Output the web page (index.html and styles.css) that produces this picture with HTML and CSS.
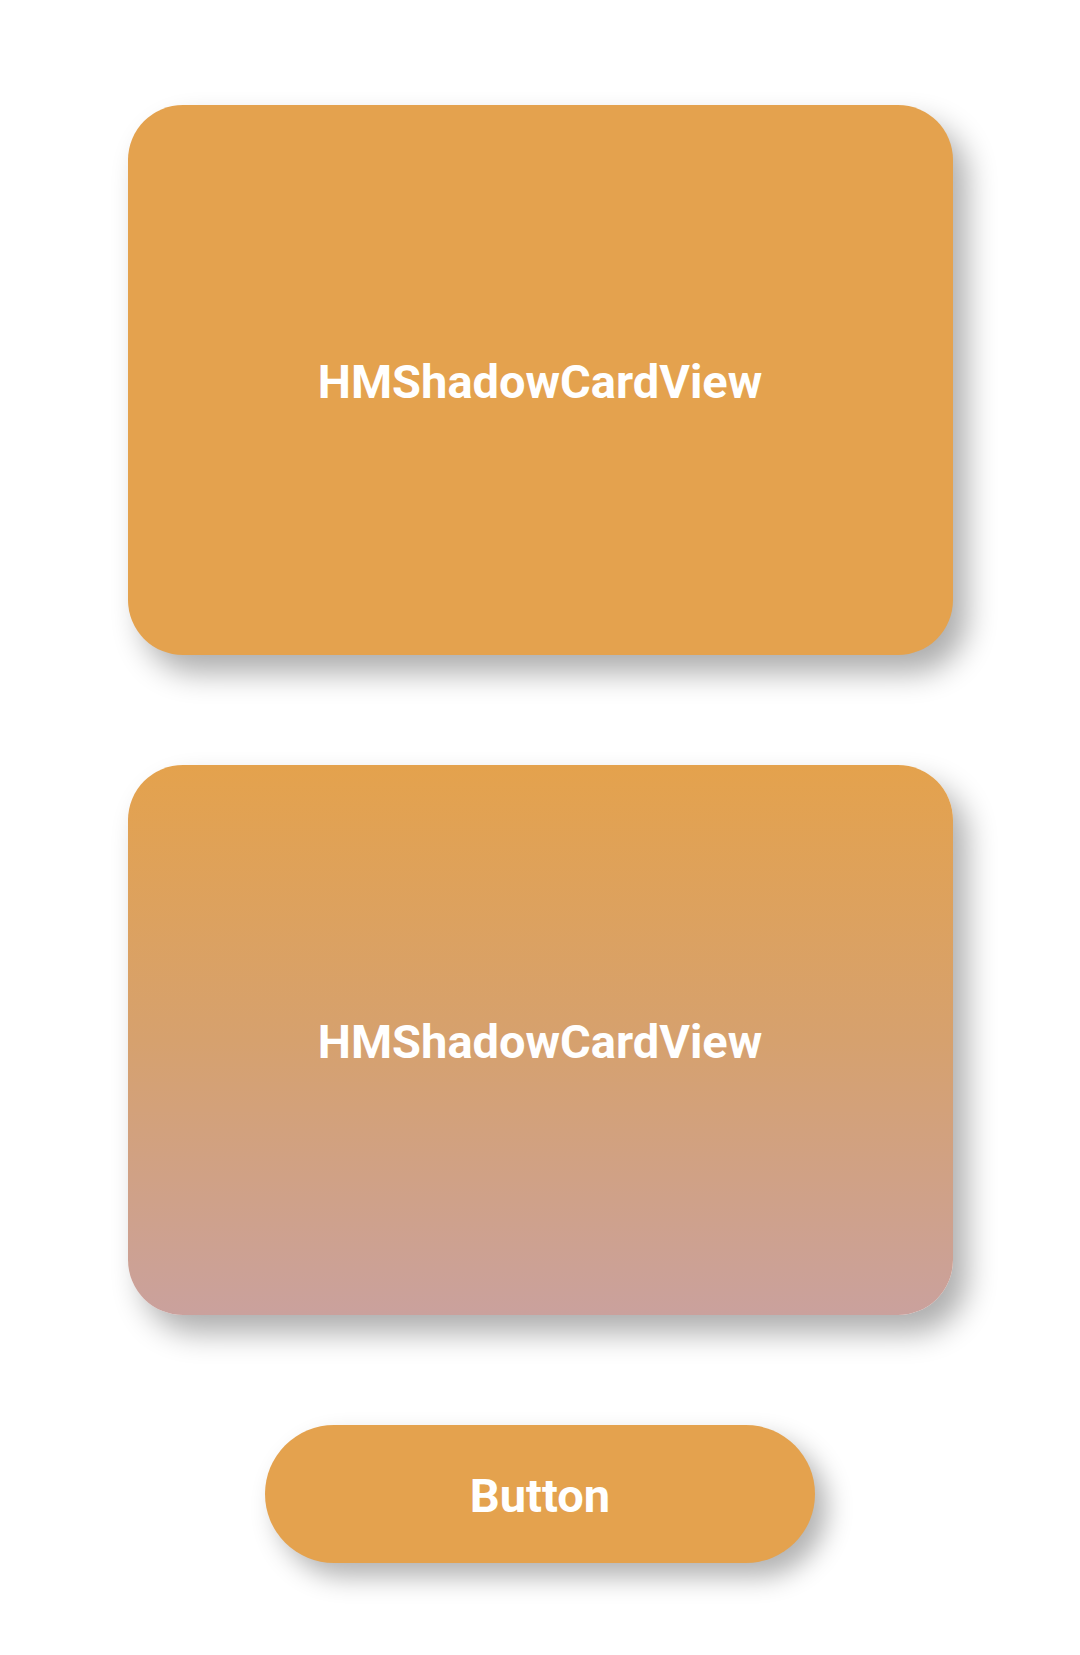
FILE: index.html
```html
<!DOCTYPE html>
<html>
<head>
<meta charset="utf-8">
<link rel="stylesheet" href="styles.css">
</head>
<body>
<main class="page">
  <div class="card card-solid"><span class="label">HMShadowCardView</span></div>
  <div class="card card-gradient"><span class="label">HMShadowCardView</span></div>
  <div class="button"><span class="label">Button</span></div>
</main>
</body>
</html>
```

FILE: styles.css
```css
html, body {
  margin: 0;
  padding: 0;
  background: #ffffff;
}
.page {
  display: flex;
  flex-direction: column;
  align-items: center;
  gap: 110px;
  padding-top: 105px;
  width: 1080px;
  height: 1655px;
  box-sizing: border-box;
  font-family: Roboto, "Liberation Sans", sans-serif;
}
.card {
  width: 825px;
  height: 550px;
  border-radius: 55px;
  display: flex;
  align-items: center;
  justify-content: center;
  box-shadow: 14px 18px 30px rgba(0, 0, 0, 0.32);
  flex: none;
}
.card-solid {
  background: #e4a24e;
}
.card-gradient {
  background: linear-gradient(to bottom, #e4a24d 0%, #d6a16e 50%, #caa19d 100%);
}
.button {
  width: 550px;
  height: 138px;
  border-radius: 69px;
  background: #e4a24e;
  display: flex;
  align-items: center;
  justify-content: center;
  box-shadow: 12px 14px 26px rgba(0, 0, 0, 0.3);
  flex: none;
}
.label {
  color: #ffffff;
  font-weight: 700;
  font-size: 47px;
  line-height: 1;
  padding-top: 2px;
}
```
